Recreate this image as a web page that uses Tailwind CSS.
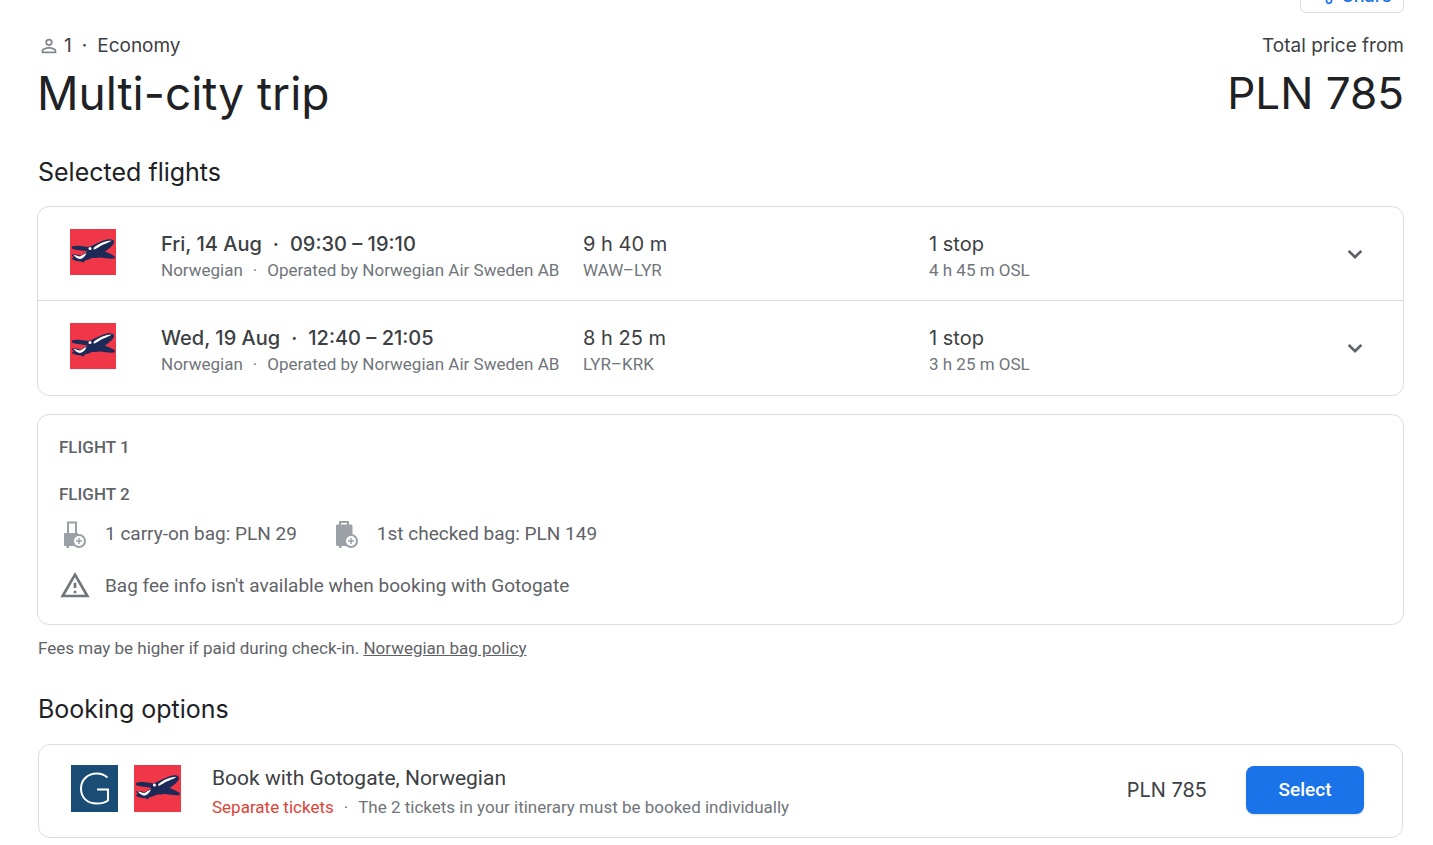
<!DOCTYPE html>
<html lang="en">
<head>
    <meta charset="UTF-8">
    <meta name="viewport" content="width=device-width, initial-scale=1.0">
    <title>Multi-city trip</title>
    <script src="https://cdn.jsdelivr.net/npm/@tailwindcss/browser@4"></script>
</head>
<body class="font-['Roboto',sans-serif] bg-white text-[#3c4043] overflow-hidden">
    <!-- Shared symbols -->
    <svg class="hidden" aria-hidden="true">
        <symbol id="norwegian" viewBox="0 0 46 46">
            <rect width="46" height="46" fill="#f03748"/>
            <path fill="#1b2a57" d="M1.500 17.500C6 16 12 17 18.500 18C24 16.500 30 12 37 10.500C41 9.500 44.500 10.500 44 13.500C43.500 16 39.500 19.500 35 22.500C38.500 24 42 25.500 45 27.500L44.500 29.500C40 30 34 29 30 28.500C27 29 24 29 22 29C19 30.500 16.500 31 15 31.500L13.500 33.500L12 33L11 32.500C8 32.500 5 31.500 2.500 30.500L2 29L4 28.500L1.500 26C4 25 8 26 11 26.500L17.500 22.500C12 21.500 7 21 2.500 20Z"/>
            <path fill="#fff" d="M24 18.500C29 14.500 36 11.500 41.500 11.500C39.500 13.500 34 15 30.500 17C28 18.500 25.500 20.500 23.500 20.500Z"/>
            <path fill="#fff" d="M3.500 26C6.500 26 8 27.500 10 27.500C12 26.500 14 25 16.500 24C15.500 27 13 29.500 10 30C7 29.500 5 27.500 3.500 26Z"/>
            <circle cx="20" cy="19.500" r="1.500" fill="#fff"/>
        </symbol>
        <symbol id="chevron" viewBox="0 0 24 24">
            <path d="M7.410 8.590L12 13.170l4.590-4.580L18.300 10l-6.300 6.300-6.300-6.300z"/>
        </symbol>
    </svg>

    <main class="pl-[37px] pr-[29px]">
        <div class="flex justify-end -mt-[29px]">
            <button class="flex items-center gap-2 h-[42px] w-[104px] pl-[13px] pt-1.5 border border-[#dadce0] rounded-md bg-white font-['Inter',sans-serif] text-[18px] font-medium text-[#1a73e8] cursor-pointer">
                <svg class="size-5 fill-none stroke-[#1a73e8]" viewBox="0 0 24 24" stroke-width="2">
                    <path d="M8 11l8-5M8 13l8 5"/>
                    <circle cx="6" cy="12" r="2.500"/><circle cx="18" cy="5" r="2.500"/><circle cx="18" cy="19" r="3"/>
                </svg>
                Share
            </button>
        </div>

        <header class="flex justify-between mt-[19px] font-['Inter',sans-serif]">
            <div>
                <p class="flex items-center h-7 pl-px text-[19px]">
                    <svg class="size-[22px] fill-[#80868b]" viewBox="0 0 24 24">
                        <path d="M12 5.900a2.100 2.100 0 1 1 0 4.200 2.100 2.100 0 0 1 0-4.200m0 9c2.970 0 6.100 1.460 6.100 2.100v1.100H5.900V17c0-.64 3.130-2.100 6.100-2.100M12 4a4 4 0 1 0 0 8 4 4 0 0 0 0-8zm0 9c-2.670 0-8 1.340-8 4v3h16v-3c0-2.660-5.330-4-8-4z"/>
                    </svg>
                    <span class="ml-1">1</span><span class="mx-[10px]">·</span><span>Economy</span>
                </p>
                <h1 class="text-[46px] leading-[66px] text-[#202124]">Multi-city trip</h1>
            </div>
            <div class="text-right">
                <p class="h-7 leading-7 text-[19px]">Total price from</p>
                <p class="text-[44px] leading-[66px] text-[#202124]">PLN 785</p>
            </div>
        </header>

        <h2 class="mt-[30px] pl-px leading-8 text-[25px] text-[#202124] font-['Inter',sans-serif]">Selected flights</h2>

        <section class="mt-[18px] pb-px border border-[#dadce0] rounded-xl">
            <div class="grid grid-cols-[91px_422fr_346fr_410fr_32px] items-center pt-[15px] pb-[18px] px-8 border-b border-[#dadce0]">
                <svg class="size-[46px]"><use href="#norwegian"/></svg>
                <div class="pt-2 whitespace-nowrap">
                    <h3 class="text-[20px] leading-7 font-medium font-['Inter',sans-serif]">Fri, 14 Aug<span class="mx-[11px]">·</span>09:30 – 19:10</h3>
                    <p class="text-[17px] leading-6 text-[#70757a]">Norwegian<span class="mx-2.5">·</span>Operated by Norwegian Air Sweden AB</p>
                </div>
                <div class="pt-2">
                    <p class="text-[20px] leading-7 font-['Inter',sans-serif]">9 h 40 m</p>
                    <p class="text-[17px] leading-6 text-[#70757a]">WAW–LYR</p>
                </div>
                <div class="pt-2">
                    <p class="text-[20px] leading-7 font-['Inter',sans-serif]">1 stop</p>
                    <p class="text-[17px] leading-6 text-[#70757a]">4 h 45 m OSL</p>
                </div>
                <button class="flex justify-center pt-1 cursor-pointer" aria-label="Flight details, 14 Aug">
                    <svg class="size-7 fill-[#5f6368]"><use href="#chevron"/></svg>
                </button>
            </div>
            <div class="grid grid-cols-[91px_422fr_346fr_410fr_32px] items-center pt-[15px] pb-[18px] px-8">
                <svg class="size-[46px]"><use href="#norwegian"/></svg>
                <div class="pt-2 whitespace-nowrap">
                    <h3 class="text-[20px] leading-7 font-medium font-['Inter',sans-serif]">Wed, 19 Aug<span class="mx-[11px]">·</span>12:40 – 21:05</h3>
                    <p class="text-[17px] leading-6 text-[#70757a]">Norwegian<span class="mx-2.5">·</span>Operated by Norwegian Air Sweden AB</p>
                </div>
                <div class="pt-2">
                    <p class="text-[20px] leading-7 font-['Inter',sans-serif]">8 h 25 m</p>
                    <p class="text-[17px] leading-6 text-[#70757a]">LYR–KRK</p>
                </div>
                <div class="pt-2">
                    <p class="text-[20px] leading-7 font-['Inter',sans-serif]">1 stop</p>
                    <p class="text-[17px] leading-6 text-[#70757a]">3 h 25 m OSL</p>
                </div>
                <button class="flex justify-center pt-1 cursor-pointer" aria-label="Flight details, 19 Aug">
                    <svg class="size-7 fill-[#5f6368]"><use href="#chevron"/></svg>
                </button>
            </div>
        </section>

        <!-- Bag fees -->
        <section class="mt-[18px] pt-5 pb-[22px] px-[21px] border border-[#dadce0] rounded-xl text-[#5f6368]">
            <h3 class="text-[17px] leading-6 font-medium">FLIGHT 1</h3>
            <h3 class="mt-[23px] text-[17px] leading-6 font-medium">FLIGHT 2</h3>
            <div class="flex gap-[34px] mt-[13px] text-[19px] leading-7">
                <p class="flex items-center gap-4">
                    <svg class="size-[30px]" viewBox="0 0 30 30">
                        <path fill="none" stroke="#9aa0a6" stroke-width="2" d="M9 16V3.500h8V16"/>
                        <path fill="#9aa0a6" d="M6 14h13v13H10v2H7.500v-2H6a1 1 0 0 1-1-1V15a1 1 0 0 1 1-1z"/>
                        <circle cx="20" cy="22" r="7" fill="#9aa0a6"/>
                        <circle cx="20" cy="22" r="5" fill="#fff"/>
                        <path stroke="#9aa0a6" stroke-width="1.500" d="M20 19v6M17 22h6"/>
                    </svg>
                    1 carry-on bag: PLN 29
                </p>
                <p class="flex items-center gap-4">
                    <svg class="size-[30px]" viewBox="0 0 30 30">
                        <path fill="none" stroke="#9aa0a6" stroke-width="2" d="M9 7V3h8V7"/>
                        <path fill="#9aa0a6" d="M6 5.500h14a1.500 1.500 0 0 1 1.500 1.500v20H10.500v2H8v-2H6.500A1.500 1.500 0 0 1 5 25.500V7a1.500 1.500 0 0 1 1-1.500z"/>
                        <circle cx="20" cy="22" r="7" fill="#9aa0a6"/>
                        <circle cx="20" cy="22" r="5" fill="#fff"/>
                        <path stroke="#9aa0a6" stroke-width="1.500" d="M20 19v6M17 22h6"/>
                    </svg>
                    1st checked bag: PLN 149
                </p>
            </div>
            <p class="flex items-center gap-[14px] mt-[21px] text-[19px] leading-7">
                <svg class="size-8 fill-[#70757a]" viewBox="0 0.500 24 24">
                    <path d="M12 5.990L19.530 19H4.470L12 5.990M12 2L1 21h22L12 2zm1 14h-2v2h2v-2zm0-6h-2v4h2v-4z"/>
                </svg>
                Bag fee info isn't available when booking with Gotogate
            </p>
        </section>
        <p class="mt-[11px] pl-px text-[17px] leading-6 text-[#5f6368]">Fees may be higher if paid during check-in. <a href="#" class="underline">Norwegian bag policy</a></p>

        <h2 class="mt-[33px] pl-px leading-8 text-[25px] text-[#202124] font-['Inter',sans-serif]">Booking options</h2>

        <section class="flex items-center mt-[19px] mx-px py-[15px] pl-8 pr-[38px] border border-[#dadce0] rounded-xl">
            <div class="flex gap-4 pb-1.5 shrink-0">
                <svg class="size-[47px]" viewBox="0 0 47 47" role="img" aria-label="Gotogate">
                    <rect width="47" height="47" fill="#1a4d75"/>
                    <path fill="none" stroke="#fff" stroke-width="2" d="M36.500 12.500C33 9.500 30 8.500 26 8.500C16 8.500 10 15.500 10 23.500C10 32.500 16 38.500 26 38.500C30 38.500 34 37.500 37 35.500V24.500H26"/>
                </svg>
                <svg class="size-[47px]"><use href="#norwegian"/></svg>
            </div>
            <div class="ml-[31px] pt-1 grow">
                <h3 class="text-[21px] leading-7">Book with Gotogate, Norwegian</h3>
                <p class="text-[17px] leading-[30px] text-[#70757a]"><span class="text-[#db4437]">Separate tickets</span><span class="mx-2.5">·</span>The 2 tickets in your itinerary must be booked individually</p>
            </div>
            <div class="flex items-center pb-0.5">
                <span class="text-[20px] font-['Inter',sans-serif]">PLN 785</span>
                <button class="ml-[39px] w-[118px] h-12 rounded-lg bg-[#1a73e8] text-white text-[19px] font-medium shadow-sm cursor-pointer">Select</button>
            </div>
        </section>
    </main>
</body>
</html>
